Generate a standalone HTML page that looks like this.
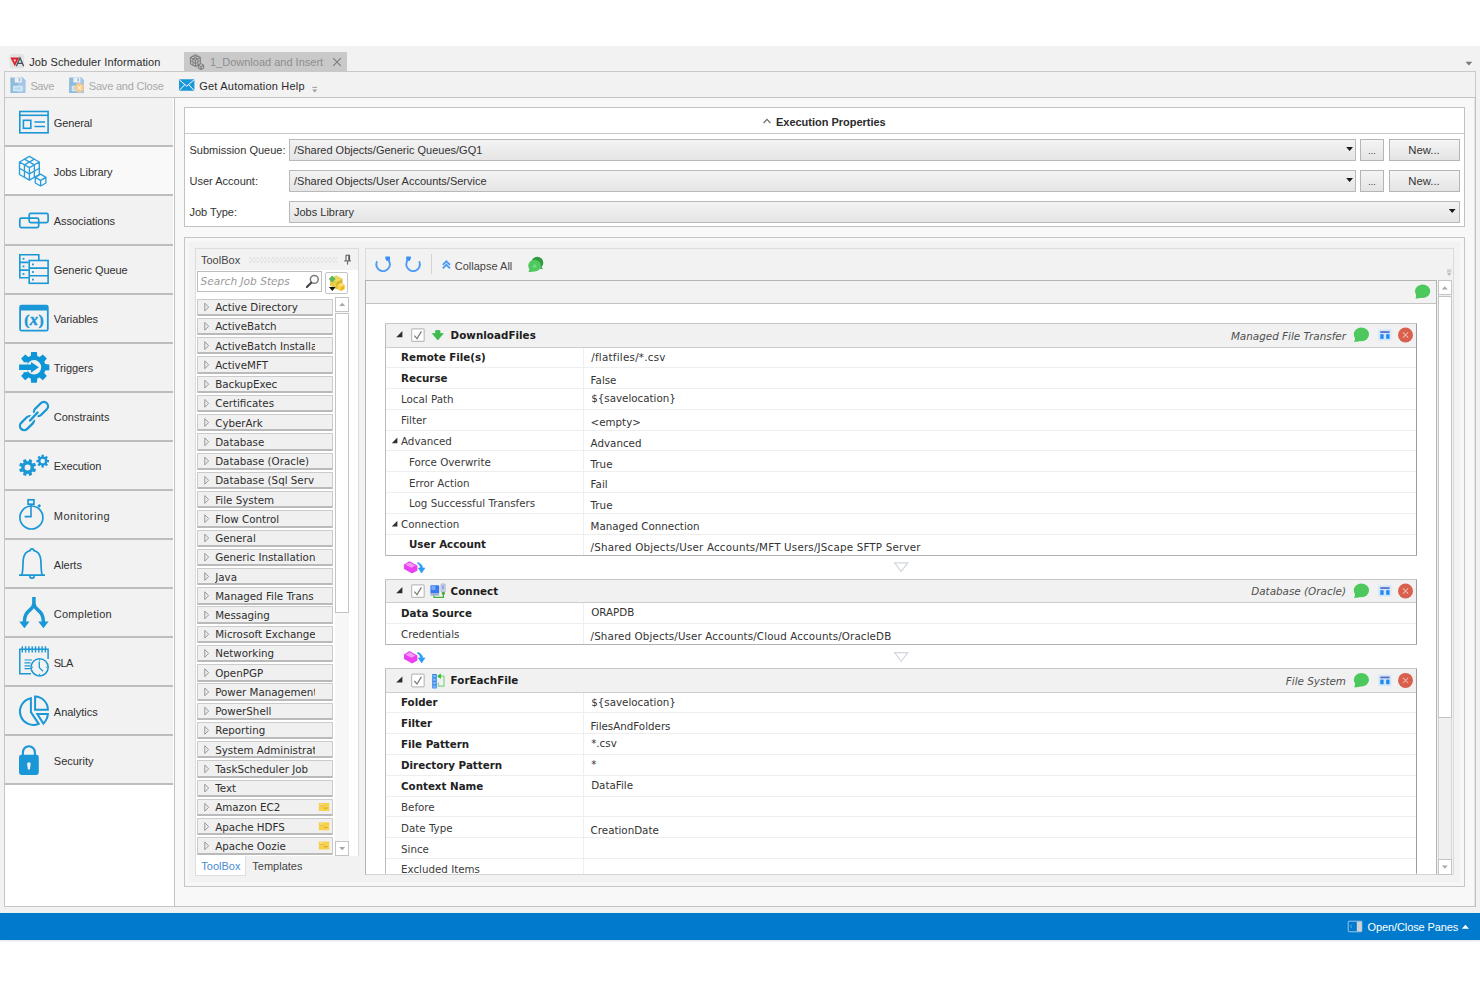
<!DOCTYPE html>
<html lang="en"><head><meta charset="utf-8"><title>Job Scheduler Information</title>
<style>
html,body{margin:0;padding:0;background:#fff;}
body{width:1480px;height:987px;position:relative;overflow:hidden;font-family:"Liberation Sans",sans-serif;font-size:11px;color:#333;}
.a{position:absolute;box-sizing:border-box;}
.t{position:absolute;white-space:nowrap;line-height:14px;}
.v{font-family:"DejaVu Sans","Liberation Sans",sans-serif;font-size:10.3px;}
.b{font-weight:bold;}
.nav{position:absolute;left:5px;width:168px;height:49.08px;box-sizing:border-box;background:#f2f2f2;border-bottom:2px solid #bdbdbd;}
.nav span{position:absolute;left:48.8px;top:17.6px;line-height:14px;white-space:nowrap;color:#303030;}
.combo{position:absolute;box-sizing:border-box;border:1px solid #b9b9b9;background:linear-gradient(#f3f3f3,#e5e5e5);height:22px;}
.btn{position:absolute;box-sizing:border-box;border:1px solid #b5b5b5;background:linear-gradient(#f5f5f5,#e4e4e4);height:22px;text-align:center;line-height:19px;}
.tbi{position:absolute;left:197px;width:136px;height:17.4px;box-sizing:border-box;background:#f0f0f0;border:1px solid #cbcbcb;border-bottom:2px solid #bababa;border-radius:1px;}
.tbi span{position:absolute;left:17.2px;top:0.6px;width:99.6px;overflow:hidden;line-height:14px;white-space:nowrap;color:#2e2e2e;font-family:"DejaVu Sans","Liberation Sans",sans-serif;font-size:10.3px;}
.step{position:absolute;left:385px;width:1032px;box-sizing:border-box;border:1px solid #9c9c9c;border-top-color:#c6c6c6;border-left-color:#bcbcbc;border-bottom-color:#b2b2b2;border-radius:1px;background:#fff;}
.sh{position:absolute;left:0;top:0;right:0;height:23.5px;background:#f1f1f1;border-bottom:1px solid #cdcdcd;box-sizing:border-box;}
.row{position:absolute;left:0;right:0;height:20.8px;box-sizing:border-box;border-bottom:1px solid #eeeeee;}
.row .l{position:absolute;top:2.8px;line-height:14px;white-space:nowrap;color:#3a3a3a;}
.row .r{position:absolute;left:204.5px;line-height:14px;white-space:nowrap;color:#333;}
</style></head>
<body>
<div class="a" style="left:0;top:46px;width:1480px;height:867px;background:#f2f2f2;"></div>
<div class="a" style="left:184px;top:51.5px;width:163px;height:20px;background:#c9c9c9;"></div>
<div class="t" style="left:29.2px;top:55px;color:#2b2b2b;letter-spacing:0.12px;">Job Scheduler Information</div>
<div class="t" style="left:210px;top:55px;color:#8e8e8e;">1_Download and Insert</div>
<div class="a" style="left:4px;top:71px;width:1472px;height:27px;border:1px solid #c9c9c9;border-bottom:none;background:#f2f2f2;"></div>
<div class="t" style="left:30.4px;top:79px;color:#a9a9a9;letter-spacing:-0.4px;">Save</div>
<div class="t" style="left:88.8px;top:79px;color:#a9a9a9;letter-spacing:-0.2px;">Save and Close</div>
<div class="t" style="left:199.2px;top:79px;color:#2b2b2b;letter-spacing:0.22px;">Get Automation Help</div>
<div class="a" style="left:4px;top:97px;width:170px;height:810px;background:#fff;border:1px solid #c6c6c6;border-right:none;"></div>
<div class="nav" style="top:98.3px;"><span style="letter-spacing:-0.14px;">General</span></div>
<div class="nav" style="top:147.38px;background:#f9f9f9;"><span style="letter-spacing:-0.11px;">Jobs Library</span></div>
<div class="nav" style="top:196.46px;"><span style="letter-spacing:-0.05px;">Associations</span></div>
<div class="nav" style="top:245.54px;"><span style="letter-spacing:-0.06px;">Generic Queue</span></div>
<div class="nav" style="top:294.62px;"><span style="letter-spacing:-0.09px;">Variables</span></div>
<div class="nav" style="top:343.7px;"><span style="letter-spacing:-0.08px;">Triggers</span></div>
<div class="nav" style="top:392.78px;"><span style="letter-spacing:0px;">Constraints</span></div>
<div class="nav" style="top:441.86px;"><span style="letter-spacing:-0.1px;">Execution</span></div>
<div class="nav" style="top:490.94px;"><span style="letter-spacing:0.5px;">Monitoring</span></div>
<div class="nav" style="top:540.02px;"><span style="letter-spacing:0px;">Alerts</span></div>
<div class="nav" style="top:589.1px;"><span style="letter-spacing:0.25px;">Completion</span></div>
<div class="nav" style="top:638.18px;"><span style="letter-spacing:-0.6px;">SLA</span></div>
<div class="nav" style="top:687.26px;"><span style="letter-spacing:0px;">Analytics</span></div>
<div class="nav" style="top:736.34px;"><span style="letter-spacing:0px;">Security</span></div>
<div class="a" style="left:173.5px;top:97px;width:1302.4px;height:810px;background:#f8f8f8;border:1px solid #c2c2c2;box-shadow:inset -0.5px 0 0 #cfcfcf;"></div>
<div class="a" style="left:184px;top:107.4px;width:1281px;height:120.1px;background:#fff;border:1px solid #c2c2c2;"></div>
<div class="a" style="left:185px;top:133.2px;width:1279px;height:1px;background:#c9c9c9;"></div>
<div class="t b" style="left:776px;top:114.5px;color:#2b2b2b;letter-spacing:-0.02px;">Execution Properties</div>
<div class="t" style="left:189.5px;top:143px;">Submission Queue:</div>
<div class="combo" style="left:289px;top:139px;width:1067px;"><span class="t" style="left:4px;top:3px;">/Shared Objects/Generic Queues/GQ1</span></div>
<div class="btn" style="left:1360px;top:139px;width:24px;font-size:9px;line-height:22px;">...</div>
<div class="btn" style="left:1388.5px;top:139px;width:71px;font-size:11.3px;line-height:20px;">New...</div>
<div class="t" style="left:189.5px;top:174px;">User Account:</div>
<div class="combo" style="left:289px;top:170px;width:1067px;"><span class="t" style="left:4px;top:3px;">/Shared Objects/User Accounts/Service</span></div>
<div class="btn" style="left:1360px;top:170px;width:24px;font-size:9px;line-height:22px;">...</div>
<div class="btn" style="left:1388.5px;top:170px;width:71px;font-size:11.3px;line-height:20px;">New...</div>
<div class="t" style="left:189.5px;top:205px;">Job Type:</div>
<div class="combo" style="left:289px;top:201px;width:1170.5px;"><span class="t" style="left:4px;top:3px;">Jobs Library</span></div>
<div class="a" style="left:184px;top:237px;width:1281px;height:650px;background:#f2f2f2;border:1px solid #c6c6c6;box-shadow:inset 0 0 0 4px #f7f7f7;"></div>
<div class="a" style="left:195px;top:248.2px;width:164px;height:608.3px;background:#fff;border:1px solid #dcdcdc;border-bottom:none;"></div>
<div class="a" style="left:196px;top:249.2px;width:162px;height:20.6px;background:#f2f2f2;"></div>
<div class="t" style="left:201px;top:253px;color:#444;">ToolBox</div>
<div class="a" style="left:197.3px;top:271px;width:125px;height:20.5px;background:#fff;border:1px solid #bdbdbd;"></div>
<div class="t v" style="left:200.5px;top:274px;color:#9a9a9a;font-style:italic;font-size:10.6px;">Search Job Steps</div>
<div class="a" style="left:325.3px;top:272.2px;width:22.7px;height:22px;background:#fff;border:1px solid #c4c4c4;border-radius:2px;"></div>
<div class="tbi" style="top:298.6px;"><span>Active Directory</span></div>
<div class="tbi" style="top:317.8px;"><span>ActiveBatch</span></div>
<div class="tbi" style="top:337.1px;"><span>ActiveBatch Installa</span></div>
<div class="tbi" style="top:356.3px;"><span>ActiveMFT</span></div>
<div class="tbi" style="top:375.6px;"><span>BackupExec</span></div>
<div class="tbi" style="top:394.8px;"><span>Certificates</span></div>
<div class="tbi" style="top:414.0px;"><span>CyberArk</span></div>
<div class="tbi" style="top:433.3px;"><span>Database</span></div>
<div class="tbi" style="top:452.5px;"><span>Database (Oracle)</span></div>
<div class="tbi" style="top:471.8px;"><span>Database (Sql Serv</span></div>
<div class="tbi" style="top:491.0px;"><span>File System</span></div>
<div class="tbi" style="top:510.2px;"><span>Flow Control</span></div>
<div class="tbi" style="top:529.5px;"><span>General</span></div>
<div class="tbi" style="top:548.7px;"><span>Generic Installation</span></div>
<div class="tbi" style="top:568.0px;"><span>Java</span></div>
<div class="tbi" style="top:587.2px;"><span>Managed File Trans</span></div>
<div class="tbi" style="top:606.4px;"><span>Messaging</span></div>
<div class="tbi" style="top:625.7px;"><span>Microsoft Exchange</span></div>
<div class="tbi" style="top:644.9px;"><span>Networking</span></div>
<div class="tbi" style="top:664.2px;"><span>OpenPGP</span></div>
<div class="tbi" style="top:683.4px;"><span>Power Management</span></div>
<div class="tbi" style="top:702.6px;"><span>PowerShell</span></div>
<div class="tbi" style="top:721.9px;"><span>Reporting</span></div>
<div class="tbi" style="top:741.1px;"><span>System Administrat</span></div>
<div class="tbi" style="top:760.4px;"><span>TaskScheduler Job</span></div>
<div class="tbi" style="top:779.6px;"><span>Text</span></div>
<div class="tbi" style="top:798.8px;"><span>Amazon EC2</span></div>
<div class="tbi" style="top:818.1px;"><span>Apache HDFS</span></div>
<div class="tbi" style="top:837.3px;"><span>Apache Oozie</span></div>
<div class="a" style="left:335.4px;top:297px;width:13.6px;height:559px;background:#f7f7f7;"></div>
<div class="a" style="left:335.4px;top:297px;width:13.6px;height:14.5px;background:#fff;border:1px solid #c4c4c4;"></div>
<div class="a" style="left:335.4px;top:313px;width:13.6px;height:300px;background:#fff;border:1px solid #c4c4c4;"></div>
<div class="a" style="left:335.4px;top:841px;width:13.6px;height:15px;background:#fff;border:1px solid #c4c4c4;"></div>
<div class="a" style="left:195px;top:856px;width:164px;height:19.5px;background:#f2f2f2;"></div>
<div class="a" style="left:195px;top:856px;width:50.5px;height:19.5px;background:#fff;border:1px solid #dedede;border-top:none;"></div>
<div class="t" style="left:201.3px;top:859px;color:#4a8bd0;">ToolBox</div>
<div class="t" style="left:252.3px;top:859px;color:#444;">Templates</div>
<div class="a" style="left:364.5px;top:248.2px;width:1089px;height:627.3px;background:#f2f2f2;border:1px solid #dcdcdc;"></div>
<div class="t" style="left:454.8px;top:258.6px;color:#444;">Collapse All</div>
<div class="a" style="left:431px;top:254px;width:1px;height:20px;background:#d4d4d4;"></div>
<div class="a" style="left:365px;top:279.5px;width:1072px;height:595.6px;background:#fff;border:1px solid #b4b4b4;border-bottom:1px solid #d4d4d4;"></div>
<div class="a" style="left:366px;top:280.5px;width:1070px;height:23px;background:#f2f2f2;border-bottom:1px solid #c4c4c4;"></div>
<div class="a" style="left:1438px;top:280px;width:13.5px;height:595px;background:#f0f0f0;border:1px solid #d6d6d6;"></div>
<div class="a" style="left:1438px;top:280px;width:13.5px;height:15px;background:#fff;border:1px solid #c4c4c4;"></div>
<div class="a" style="left:1438px;top:296px;width:13.5px;height:422px;background:#fff;border:1px solid #c4c4c4;"></div>
<div class="a" style="left:1438px;top:859px;width:13.5px;height:15.6px;background:#fff;border:1px solid #c4c4c4;"></div>
<div class="step" style="top:323px;height:232.5px;">
<div class="sh"><span class="t v b" style="left:64.6px;top:4.4px;color:#1c1c1c;letter-spacing:0.05px;">DownloadFiles</span><span class="t v" style="right:70px;top:4.6px;color:#505050;font-style:italic;font-size:10.4px;">Managed File Transfer</span></div>
<div class="row" style="top:23.5px;"><span class="l v b" style="left:15px;color:#222;">Remote File(s)</span><span class="r v" style="top:2.2px;left:205.2px;"><span style="letter-spacing:0.26px">/flatfiles/*.csv</span></span></div>
<div class="row" style="top:44.3px;"><span class="l v b" style="left:15px;color:#222;">Recurse</span><span class="r v" style="top:5.2px;left:204.6px;">False</span></div>
<div class="row" style="top:65.1px;"><span class="l v" style="left:15px;top:3.4px;">Local Path</span><span class="r v" style="top:2.2px;left:205.2px;">${savelocation}</span></div>
<div class="row" style="top:85.9px;"><span class="l v" style="left:15px;top:3.4px;">Filter</span><span class="r v" style="top:5.2px;left:204.6px;">&lt;empty&gt;</span></div>
<div class="row" style="top:106.7px;"><span class="l v" style="left:15px;top:3.4px;">Advanced</span><span class="r v" style="top:5.2px;left:204.6px;">Advanced</span></div>
<div class="row" style="top:127.5px;"><span class="l v" style="left:23px;top:3.4px;">Force Overwrite</span><span class="r v" style="top:5.2px;left:204.6px;">True</span></div>
<div class="row" style="top:148.3px;"><span class="l v" style="left:23px;top:3.4px;">Error Action</span><span class="r v" style="top:5.2px;left:204.6px;">Fail</span></div>
<div class="row" style="top:169.1px;"><span class="l v" style="left:23px;top:3.4px;">Log Successful Transfers</span><span class="r v" style="top:5.2px;left:204.6px;">True</span></div>
<div class="row" style="top:189.9px;"><span class="l v" style="left:15px;top:3.4px;">Connection</span><span class="r v" style="top:5.2px;left:204.6px;">Managed Connection</span></div>
<div class="row" style="top:210.7px;border-bottom:none;"><span class="l v b" style="left:23px;color:#222;">User Account</span><span class="r v" style="top:5.2px;left:204.6px;"><span style="letter-spacing:0.2px">/Shared Objects/User Accounts/MFT Users/JScape SFTP Server</span></span></div>
<div class="a" style="left:197px;top:23.5px;width:1px;bottom:0;background:#efefef;"></div>
</div>
<div class="step" style="top:578.7px;height:66.1px;">
<div class="sh"><span class="t v b" style="left:64.6px;top:4.4px;color:#1c1c1c;letter-spacing:0.05px;">Connect</span><span class="t v" style="right:70px;top:4.6px;color:#505050;font-style:italic;font-size:10.4px;">Database (Oracle)</span></div>
<div class="row" style="top:23.5px;"><span class="l v b" style="left:15px;color:#222;">Data Source</span><span class="r v" style="top:2.2px;left:205.2px;">ORAPDB</span></div>
<div class="row" style="top:44.3px;border-bottom:none;"><span class="l v" style="left:15px;top:3.4px;">Credentials</span><span class="r v" style="top:5.2px;left:204.6px;"><span style="letter-spacing:0.125px">/Shared Objects/User Accounts/Cloud Accounts/OracleDB</span></span></div>
<div class="a" style="left:197px;top:23.5px;width:1px;bottom:0;background:#efefef;"></div>
</div>
<div class="step" style="top:668.1px;height:206.4px;border-bottom:none;overflow:hidden;">
<div class="sh"><span class="t v b" style="left:64.6px;top:4.4px;color:#1c1c1c;letter-spacing:0.05px;">ForEachFile</span><span class="t v" style="right:70px;top:4.6px;color:#505050;font-style:italic;font-size:10.4px;">File System</span></div>
<div class="row" style="top:23.5px;"><span class="l v b" style="left:15px;color:#222;">Folder</span><span class="r v" style="top:2.2px;left:205.2px;">${savelocation}</span></div>
<div class="row" style="top:44.3px;"><span class="l v b" style="left:15px;color:#222;">Filter</span><span class="r v" style="top:5.2px;left:204.6px;">FilesAndFolders</span></div>
<div class="row" style="top:65.1px;"><span class="l v b" style="left:15px;color:#222;">File Pattern</span><span class="r v" style="top:2.2px;left:205.2px;">*.csv</span></div>
<div class="row" style="top:85.9px;"><span class="l v b" style="left:15px;color:#222;">Directory Pattern</span><span class="r v" style="top:2.2px;left:205.2px;">*</span></div>
<div class="row" style="top:106.7px;"><span class="l v b" style="left:15px;color:#222;">Context Name</span><span class="r v" style="top:2.2px;left:205.2px;">DataFile</span></div>
<div class="row" style="top:127.5px;"><span class="l v" style="left:15px;top:3.4px;">Before</span><span class="r v" style="top:5.2px;left:204.6px;"></span></div>
<div class="row" style="top:148.3px;"><span class="l v" style="left:15px;top:3.4px;">Date Type</span><span class="r v" style="top:5.2px;left:204.6px;">CreationDate</span></div>
<div class="row" style="top:169.1px;"><span class="l v" style="left:15px;top:3.4px;">Since</span><span class="r v" style="top:5.2px;left:204.6px;"></span></div>
<div class="row" style="top:189.9px;"><span class="l v" style="left:15px;top:3.4px;">Excluded Items</span><span class="r v" style="top:5.2px;left:204.6px;"></span></div>
<div class="a" style="left:197px;top:23.5px;width:1px;bottom:0;background:#efefef;"></div>
</div>
<div class="a" style="left:0;top:913.4px;width:1480px;height:26.4px;background:#007acc;box-shadow:0 1px 2px rgba(0,0,0,0.12);"></div>
<div class="t" style="left:1367.5px;top:920px;color:#fff;letter-spacing:-0.1px;">Open/Close Panes</div>
<svg class="a" style="left:0;top:0;" width="176" height="800" viewBox="0 0 176 800" fill="none" stroke="none">
<g stroke="#1a97d6" stroke-width="1.6" fill="none"><rect x="19.8" y="111.5" width="28.3" height="21.3"/><path d="M19.8,115.3H48.1"/><rect x="23.4" y="120.3" width="7.4" height="8"/><path d="M34.4,122H45M34.4,126.6H45" stroke-width="1.5"/></g>
<g transform="translate(19,155.8) scale(1) translate(-19,-155.8)" stroke="#2c9ddb" stroke-width="1.35" fill="none" stroke-linejoin="round"><path d="M29.40,156.30L39.30,162.00L39.30,174.50L29.40,180.20L19.50,174.50L19.50,162.00Z M19.50,162.00L29.40,167.70L39.30,162.00 M29.40,167.70L29.40,180.20"/><path d="M24.45,159.15L34.35,164.85M34.35,159.15L24.45,164.85M19.50,168.25L29.40,173.95M24.45,164.85L24.45,177.35M39.30,168.25L29.40,173.95M34.35,164.85L34.35,177.35"/><path d="M40.60,174.20L45.90,177.30L45.90,183.00L40.60,186.00L35.30,183.00L35.30,177.30Z M35.30,177.30L40.60,180.30L45.90,177.30 M40.60,180.30L40.60,186.00" fill="#f9f9f9"/></g>
<g stroke="#1a97d6" stroke-width="1.7" fill="none"><rect x="29.2" y="213.3" width="18.9" height="9.4" rx="1.6"/><rect x="19.8" y="218.1" width="18.9" height="9.5" rx="1.6"/></g>
<g stroke="#1a97d6" stroke-width="1.6" fill="none"><path d="M28.6,254.8H19.8V277.8H28.6M19.8,262.4H28.6M19.8,270.1H28.6M28.6,254.8H38.8V260"/><rect x="29.2" y="260.5" width="18.9" height="22.8" fill="#f2f2f2"/><path d="M29.2,268.1H48.1M29.2,275.7H48.1"/></g>
<g fill="#1a97d6"><rect x="22.6" y="257.9" width="1.8" height="1.8"/><rect x="22.6" y="265.5" width="1.8" height="1.8"/><rect x="22.6" y="273.1" width="1.8" height="1.8"/><rect x="32" y="263.5" width="1.8" height="1.8"/><rect x="32" y="271.1" width="1.8" height="1.8"/><rect x="32" y="278.7" width="1.8" height="1.8"/></g>
<path d="M21.6,304.8H46.3a2.4,2.4 0 0 1 2.4,2.4V329.2a2.4,2.4 0 0 1 -2.4,2.4H21.6a2.4,2.4 0 0 1 -2.4,-2.4V307.2a2.4,2.4 0 0 1 2.4,-2.4Z M21,310.6V329.8H46.9V310.6Z" fill="#1a97d6" fill-rule="evenodd"/>
<text x="34" y="325.4" text-anchor="middle" font-family="'Liberation Serif',serif" font-weight="bold" font-size="15.5" fill="#1a97d6" stroke="#1a97d6" stroke-width="0.45">(<tspan font-style="italic" font-size="16.5" dx="0.3">x</tspan><tspan dx="0.6">)</tspan></text>
<path d="M45.24,364.04 L49.33,364.43 L49.33,370.17 L45.24,370.56 L44.25,372.94 L46.87,376.11 L42.81,380.17 L39.64,377.55 L37.26,378.54 L36.87,382.63 L31.13,382.63 L30.74,378.54 L28.36,377.55 L25.19,380.17 L21.13,376.11 L23.75,372.94 L22.76,370.56 L18.67,370.17 L18.67,364.43 L22.76,364.04 L23.75,361.66 L21.13,358.49 L25.19,354.43 L28.36,357.05 L30.74,356.06 L31.13,351.97 L36.87,351.97 L37.26,356.06 L39.64,357.05 L42.81,354.43 L46.87,358.49 L44.25,361.66Z M26.80,367.30 a7.2,7.2 0 1,0 14.4,0 a7.2,7.2 0 1,0 -14.4,0Z" fill="#0c96d8" fill-rule="evenodd"/>
<rect x="17" y="362.3" width="10.6" height="9.9" fill="#f2f2f2"/>
<path d="M19.1,364.6H31V361.9L38.9,367.3L31,372.7V370H19.1Z" fill="#0c96d8"/>
<g stroke="#1a97d6" stroke-width="2.3" fill="none" stroke-linecap="round"><rect x="-8.2" y="-4.25" width="16.4" height="8.5" rx="4.25" transform="translate(41,409) rotate(-45)"/><rect x="-8.2" y="-4.25" width="16.4" height="8.5" rx="4.25" transform="translate(27,423.1) rotate(-45)"/><path d="M31.6,418.9L36.2,414" stroke="#f2f2f2" stroke-width="5.4" stroke-linecap="butt"/><path d="M30.1,420.5L37.6,412.5" stroke-width="2.4"/></g>
<path d="M33.86,468.25 L36.10,469.34 L34.92,472.21 L32.55,471.39 L31.49,472.45 L32.31,474.82 L29.44,476.00 L28.35,473.76 L26.85,473.76 L25.76,476.00 L22.89,474.82 L23.71,472.45 L22.65,471.39 L20.28,472.21 L19.10,469.34 L21.34,468.25 L21.34,466.75 L19.10,465.66 L20.28,462.79 L22.65,463.61 L23.71,462.55 L22.89,460.18 L25.76,459.00 L26.85,461.24 L28.35,461.24 L29.44,459.00 L32.31,460.18 L31.49,462.55 L32.55,463.61 L34.92,462.79 L36.10,465.66 L33.86,466.75Z M24.60,467.50 a3.0,3.0 0 1,0 6.0,0 a3.0,3.0 0 1,0 -6.0,0Z M47.13,459.86 L49.00,459.96 L49.00,462.24 L47.13,462.34 L46.71,463.35 L47.96,464.75 L46.35,466.36 L44.95,465.11 L43.94,465.53 L43.84,467.40 L41.56,467.40 L41.46,465.53 L40.45,465.11 L39.05,466.36 L37.44,464.75 L38.69,463.35 L38.27,462.34 L36.40,462.24 L36.40,459.96 L38.27,459.86 L38.69,458.85 L37.44,457.45 L39.05,455.84 L40.45,457.09 L41.46,456.67 L41.56,454.80 L43.84,454.80 L43.94,456.67 L44.95,457.09 L46.35,455.84 L47.96,457.45 L46.71,458.85Z M40.40,461.10 a2.3,2.3 0 1,0 4.6,0 a2.3,2.3 0 1,0 -4.6,0Z" fill="#1a97d6" fill-rule="evenodd"/>
<g stroke="#1a97d6" stroke-width="1.7" fill="none"><circle cx="31.4" cy="517.5" r="11.5"/><rect x="28.1" y="499.8" width="5.8" height="4.4"/><path d="M31,505V516.6H24.6" stroke-width="1.6"/><path d="M38.2,506.8L40.2,504.8" stroke-width="2.6"/></g>
<g stroke="#1a97d6" stroke-width="1.7" fill="none" stroke-linejoin="round"><path d="M19,575.2H45M21.8,575.2C23.4,570 22.6,563 23.4,558.5C24.3,553.6 27,551.2 30.2,550.6C30.2,548.3 33.8,548.3 33.8,550.6C37,551.2 39.7,553.6 40.6,558.5C41.4,563 40.6,570 42.2,575.2"/><path d="M29.6,576C30.2,579 33.8,579 34.4,576" stroke-width="1.6"/></g>
<g stroke="#1a97d6" stroke-width="3.5" fill="none"><path d="M33.9,597V603.5C33.9,610.5 24.3,609 24.3,622.5"/><path d="M33.9,603.5C33.9,610.5 43.5,609 43.5,622.5"/></g>
<path d="M19.2,621.6H29.6L24.4,628.3Z M38.2,621.6H48.6L43.4,628.3Z" fill="#1a97d6"/>
<g stroke="#1a97d6" stroke-width="1.5" fill="none"><path d="M31,673.8H19.8V649.3H48.1V659"/><path d="M22.3,646.2V652.6M25.6,646.2V652.6M28.9,646.2V652.6M32.2,646.2V652.6M35.5,646.2V652.6M38.8,646.2V652.6M42.1,646.2V652.6M45.4,646.2V652.6" stroke-width="1.4"/><path d="M24.5,660H32M24.5,662.9H30.5M24.5,665.8H30M24.5,668.7H30.5" stroke-width="1.2"/><circle cx="39.6" cy="667.3" r="8.6" fill="#f2f2f2"/><path d="M39.3,661.5V667.6L43,671.2" stroke-width="1.3"/><path d="M39.6,659.6V660.8M39.6,673.8V675M31.9,667.3H33.1M46.1,667.3H47.3" stroke-width="1"/></g>
<g stroke="#1a97d6" stroke-width="2" fill="none" stroke-linejoin="miter"><path d="M30.9,698.2A13.5,13.5 0 1 0 38.7,723.9L30.9,712.1Z"/><path d="M35.1,696.6A13.1,13.1 0 0 1 47.9,709.8H35.1Z"/><path d="M37.3,714H47.9C47.6,718 45.6,721.4 43.4,723.6Z"/></g>
<path d="M22.9,756V752.5A6,6.3 0 0 1 34.9,752.5V756" stroke="#1a97d6" stroke-width="2.1" fill="none"/>
<path d="M21.4,754.8H36.4A2.4,2.4 0 0 1 38.8,757.2V772.6A2.4,2.4 0 0 1 36.4,775H21.4A2.4,2.4 0 0 1 19,772.6V757.2A2.4,2.4 0 0 1 21.4,754.8Z M27.2,764.6A1.8,1.8 0 1 1 30.6,764.6L29.9,769.6H27.9Z" fill="#1a97d6" fill-rule="evenodd"/>
</svg>
<svg class="a" style="left:0;top:0;" width="1480" height="300" viewBox="0 0 1480 300" fill="none">
<rect x="9.5" y="54" width="14.6" height="14.4" rx="2.6" fill="#e3e3e3"/>
<path d="M10.4,57.6H19.3L14.8,66.2Z" fill="#d9232b"/><path d="M13.4,59.6H16.2L14.8,62.2Z" fill="#f3d0d0"/>
<path d="M16.3,66.2L20,57.9L23.7,66.2M17.8,63.4H22.3" stroke="#445260" stroke-width="1.3" stroke-linejoin="miter"/>
<g transform="translate(190.2,54.4) scale(0.5) translate(-19,-155.8)" stroke="#808080" stroke-width="2.2" fill="none" stroke-linejoin="round"><path d="M29.40,156.30L39.30,162.00L39.30,174.50L29.40,180.20L19.50,174.50L19.50,162.00Z M19.50,162.00L29.40,167.70L39.30,162.00 M29.40,167.70L29.40,180.20"/><path d="M24.45,159.15L34.35,164.85M34.35,159.15L24.45,164.85M19.50,168.25L29.40,173.95M24.45,164.85L24.45,177.35M39.30,168.25L29.40,173.95M34.35,164.85L34.35,177.35"/><path d="M40.60,174.20L45.90,177.30L45.90,183.00L40.60,186.00L35.30,183.00L35.30,177.30Z M35.30,177.30L40.60,180.30L45.90,177.30 M40.60,180.30L40.60,186.00" fill="#c9c9c9"/></g>
<path d="M333.2,58.2L340.8,65.8M340.8,58.2L333.2,65.8" stroke="#7a7a7a" stroke-width="1.1"/>
<path d="M1465.5,61.8H1472.3L1468.9,65.6Z" fill="#7a7a7a"/>
<path d="M10.4,77.5H22.6L25.3,80.2V93.0H10.4Z" fill="#8fbcdb"/><path d="M18.0,77.5H22.6L25.3,80.2V93.0H18.0Z" fill="#a6c6e6"/><rect x="14.7" y="77.5" width="7" height="5" fill="#eef2f7"/><rect x="18.700000000000003" y="78.3" width="1.5" height="3" fill="#8fb4e0"/><rect x="13.0" y="85.7" width="9.8" height="5.6" rx="0.8" fill="#d4e9f6"/><rect x="14.600000000000001" y="87.3" width="6.6" height="2.4" rx="0.8" fill="#b4d8f2"/>
<path d="M69.1,77.5H81.3L84.0,80.2V93.0H69.1Z" fill="#8fbcdb"/><path d="M76.69999999999999,77.5H81.3L84.0,80.2V93.0H76.69999999999999Z" fill="#a6c6e6"/><rect x="73.39999999999999" y="77.5" width="7" height="5" fill="#eef2f7"/><rect x="77.39999999999999" y="78.3" width="1.5" height="3" fill="#8fb4e0"/><rect x="71.69999999999999" y="85.7" width="9.8" height="5.6" rx="0.8" fill="#d4e9f6"/><rect x="73.3" y="87.3" width="6.6" height="2.4" rx="0.8" fill="#b4d8f2"/>
<circle cx="79.4" cy="87.8" r="4.6" fill="#f6c98c"/><path d="M77.6,85.8L81.2,89.8M81.2,85.8L77.6,89.8" stroke="#fdf0dc" stroke-width="1.1"/>
<rect x="179" y="79.3" width="15.4" height="11.5" rx="0.8" fill="#1a97d6"/><path d="M179.4,79.9L186.7,86.2L194,79.9M179.4,90.4L184.6,84.8M194,90.4L188.8,84.8" stroke="#fff" stroke-width="1"/>
<path d="M312.4,87.4H317" stroke="#9a9a9a" stroke-width="1"/><path d="M312.3,89.4H317.1L314.7,92.6Z" fill="#9a9a9a"/>
<path d="M763.6,123L767,119.4L770.4,123" stroke="#6a6a6a" stroke-width="1.2"/>
<path d="M1346.1999999999998,147H1353.0L1349.6,151Z" fill="#1a1a1a"/>
<path d="M1346.1999999999998,178H1353.0L1349.6,182Z" fill="#1a1a1a"/>
<path d="M1448.8,209H1455.6000000000001L1452.2,213Z" fill="#1a1a1a"/>
<defs><pattern id="grip" x="249" y="257" width="3.8" height="4.2" patternUnits="userSpaceOnUse"><rect x="0.3" y="0.2" width="1.5" height="1.3" fill="#d6d6d6"/><rect x="2.2" y="2.3" width="1.5" height="1.3" fill="#d6d6d6"/></pattern></defs>
<rect x="249" y="257" width="88.3" height="6" fill="url(#grip)"/>
<path d="M346,255.2H349.6V260.5" stroke="#555" stroke-width="1"/><path d="M346,255.2V260.5" stroke="#555" stroke-width="1"/><path d="M349.1,255.2V260.5" stroke="#555" stroke-width="1.6"/><path d="M344.3,260.9H350.8" stroke="#555" stroke-width="1.1"/><path d="M347.6,261.4V264.6" stroke="#555" stroke-width="1"/>
<circle cx="314.3" cy="279.4" r="3.9" stroke="#7c7c7c" stroke-width="1.5" fill="#fff"/><path d="M311.2,282.7L306.9,286.9" stroke="#444" stroke-width="2.1" stroke-linecap="round"/>
<path d="M330.2,279L336.3,275.4L342.5,279V285.6L336.3,289.2L330.2,285.6Z" fill="#d9b728"/><path d="M330.2,279L336.3,282.4V289.2L330.2,285.6Z" fill="#e6cd4a"/><path d="M336.3,275.4L342.5,279L336.3,282.4L330.2,279Z" fill="#ecd85e"/>
<path d="M332.2,275.4L335.6,278.9L332.2,282.4L328.8,278.9Z" fill="#5cb860"/>
<path d="M337.4,285L341,283L344.6,285V289L341,291L337.4,289Z" fill="#f2b60c"/><path d="M337.4,285L341,287V291L337.4,289Z" fill="#f7d24c"/><path d="M341,283L344.6,285L341,287L337.4,285Z" fill="#f9e07a"/>
<path d="M329,287H335.6L332.3,290.9Z" fill="#111"/>
<path d="M376.71,261.97A6.8,6.8 0 1 0 386.29,258.30" stroke="#4f9cf9" stroke-width="1.9" stroke-linecap="round"/>
<path d="M385.2,256.6H390V261.2L388.3,259.3L386.4,261.2Z" fill="#3b8ff8"/>
<path d="M419.49,261.97A6.8,6.8 0 1 1 409.91,258.30" stroke="#4f9cf9" stroke-width="1.9" stroke-linecap="round"/>
<path d="M411,256.6H406.2V261.2L407.9,259.3L409.8,261.2Z" fill="#3b8ff8"/>
<path d="M442.8,264.9L446.4,261.3L450,264.9M442.8,268.4L446.4,264.8L450,268.4" stroke="#4a98f8" stroke-width="1.7"/>
<circle cx="537.3" cy="262.7" r="6" fill="#2f9a3f"/><path d="M541,266.5L543.2,269.3L539,268.2Z" fill="#2f9a3f"/>
<ellipse cx="534.6" cy="265.6" rx="6.4" ry="5.9" fill="#4fc85e"/><path d="M529.10,267.67C529.48,270.32 528.84,271.50 528.39,272.09C531.40,272.09 533.32,271.38 534.60,270.91Z" fill="#4fc85e"/>
<path d="M532.2,267.6L534.6,263.4L537,267.6Z" fill="#7ad987"/>
<path d="M1447,270H1451.4M1447,271.8H1451.4" stroke="#b4b4b4" stroke-width="0.9"/><path d="M1447,273.2H1451.4L1449.2,275.8Z" fill="#b4b4b4"/>
<ellipse cx="1422.6" cy="291.2" rx="7.6" ry="6.7" fill="#4cc85c"/><path d="M1416.06,293.55C1416.52,296.56 1415.76,297.90 1415.23,298.57C1418.80,298.57 1421.08,297.77 1422.60,297.23Z" fill="#4cc85c"/>
</svg>
<svg class="a" style="left:0;top:0;" width="1480" height="987" viewBox="0 0 1480 987" fill="none">
<path d="M402.4,331V337.2H396.2Z" fill="#2e2e2e"/><rect x="411.6" y="328.8" width="12.6" height="12.6" rx="1" fill="#fff" stroke="#bdbdbd" stroke-width="1.2"/><path d="M414.3,335.6L417,338.6L421.4,331.4" stroke="#808080" stroke-width="1.3" fill="none"/><path d="M435.6,330.6H440V333.6H443.2L437.8,340L432.4,333.6H435.6Z" fill="#3dbb4b" stroke="#3dbb4b" stroke-width="0.8" stroke-linejoin="round"/><ellipse cx="1361.4" cy="334.4" rx="7.6" ry="6.8" fill="#4cc85c"/><path d="M1354.86,336.78C1355.32,339.84 1354.56,341.20 1354.03,341.88C1357.60,341.88 1359.88,341.06 1361.40,340.52Z" fill="#4cc85c"/><rect x="1378.4" y="329.4" width="12.8" height="11" fill="#cfe6fb"/><rect x="1380.3" y="331.2" width="9.2" height="1.7" fill="#5668c2"/><rect x="1380.3" y="334.2" width="3.3" height="4.6" fill="#1d8af0"/><rect x="1386.2" y="334.2" width="3.3" height="4.6" fill="#1d8af0"/><circle cx="1405.5" cy="335" r="7.5" fill="#d9604c"/><path d="M1402.9,332.4L1408.1,337.6M1408.1,332.4L1402.9,337.6" stroke="#efb8ad" stroke-width="1.05"/>
<path d="M404,564.6L409.4,561.2L417.4,565.6V570.6L412.2,573.6L404,569Z" fill="#e840f0"/><path d="M405.4,564.8L409.5,562.4L415.4,565.6L411.6,567.8Z" fill="#f29af6"/><path d="M417.6,562.4C421,563.4 422.6,565.6 422.6,568H425L421.6,573L418.2,568H420.4C420.2,566 419.4,564.4 417.6,563.6Z" fill="#2a9df4" stroke="#2a9df4" stroke-width="0.6" stroke-linejoin="round"/><path d="M894.6,562.8H907.8L901.2,571.4Z" stroke="#d3d7e1" stroke-width="1.2" fill="none"/>
<path d="M402.4,587V593.2H396.2Z" fill="#2e2e2e"/><rect x="411.6" y="584.8" width="12.6" height="12.6" rx="1" fill="#fff" stroke="#bdbdbd" stroke-width="1.2"/><path d="M414.3,591.6L417,594.6L421.4,587.4" stroke="#808080" stroke-width="1.3" fill="none"/><rect x="430.4" y="585.2" width="8.8" height="8.4" rx="0.8" fill="#3a78f0"/><rect x="431.4" y="586" width="4" height="4" fill="#78a8fa"/><path d="M430.4,593.4H439.2V595.6H430.4Z" fill="#9ab0d0"/><rect x="441" y="584" width="4.2" height="8" rx="0.6" fill="#d6dcea" stroke="#98a6c4" stroke-width="0.7"/><rect x="442.4" y="585.2" width="1.2" height="4.4" fill="#6a86d8"/><path d="M434,595.4V597.4H443.4V593.6" stroke="#4aae3a" stroke-width="1.3" fill="none"/><circle cx="443.4" cy="593.2" r="1.5" fill="#3aa82a"/><ellipse cx="1361.4" cy="590.4" rx="7.6" ry="6.8" fill="#4cc85c"/><path d="M1354.86,592.78C1355.32,595.84 1354.56,597.20 1354.03,597.88C1357.60,597.88 1359.88,597.06 1361.40,596.52Z" fill="#4cc85c"/><rect x="1378.4" y="585.4" width="12.8" height="11" fill="#cfe6fb"/><rect x="1380.3" y="587.2" width="9.2" height="1.7" fill="#5668c2"/><rect x="1380.3" y="590.2" width="3.3" height="4.6" fill="#1d8af0"/><rect x="1386.2" y="590.2" width="3.3" height="4.6" fill="#1d8af0"/><circle cx="1405.5" cy="591" r="7.5" fill="#d9604c"/><path d="M1402.9,588.4L1408.1,593.6M1408.1,588.4L1402.9,593.6" stroke="#efb8ad" stroke-width="1.05"/>
<path d="M404,654.5L409.4,651.1L417.4,655.5V660.5L412.2,663.5L404,658.9Z" fill="#e840f0"/><path d="M405.4,654.6999999999999L409.5,652.3L415.4,655.5L411.6,657.6999999999999Z" fill="#f29af6"/><path d="M417.6,652.3C421,653.3 422.6,655.5 422.6,657.9H425L421.6,662.9L418.2,657.9H420.4C420.2,655.9 419.4,654.3 417.6,653.5Z" fill="#2a9df4" stroke="#2a9df4" stroke-width="0.6" stroke-linejoin="round"/><path d="M894.6,652.6999999999999H907.8L901.2,661.3Z" stroke="#d3d7e1" stroke-width="1.2" fill="none"/>
<path d="M402.4,676.4V682.5999999999999H396.2Z" fill="#2e2e2e"/><rect x="411.6" y="674.2" width="12.6" height="12.6" rx="1" fill="#fff" stroke="#bdbdbd" stroke-width="1.2"/><path d="M414.3,681.0L417,684.0L421.4,676.8" stroke="#808080" stroke-width="1.3" fill="none"/><rect x="432.2" y="674.0" width="4.6" height="14.4" fill="#3a86ea"/><rect x="433.2" y="675.0" width="2.6" height="2.2" rx="0.5" fill="#7cc0fa"/><rect x="433.2" y="678.5" width="2.6" height="2.2" rx="0.5" fill="#7cc0fa"/><rect x="433.2" y="682.0" width="2.6" height="2.2" rx="0.5" fill="#7cc0fa"/><rect x="433.2" y="685.5" width="2.6" height="2.2" rx="0.5" fill="#7cc0fa"/><path d="M440.6,676.1999999999999H444V686.1999999999999H438.4V682.4" stroke="#86d486" stroke-width="1.2" fill="none"/><path d="M437.6,676.1999999999999L440.6,674.0V678.4Z" fill="#1fbf1f" stroke="#1fbf1f" stroke-width="0.6"/><ellipse cx="1361.4" cy="679.8" rx="7.6" ry="6.8" fill="#4cc85c"/><path d="M1354.86,682.18C1355.32,685.24 1354.56,686.60 1354.03,687.28C1357.60,687.28 1359.88,686.46 1361.40,685.92Z" fill="#4cc85c"/><rect x="1378.4" y="674.8" width="12.8" height="11" fill="#cfe6fb"/><rect x="1380.3" y="676.5999999999999" width="9.2" height="1.7" fill="#5668c2"/><rect x="1380.3" y="679.5999999999999" width="3.3" height="4.6" fill="#1d8af0"/><rect x="1386.2" y="679.5999999999999" width="3.3" height="4.6" fill="#1d8af0"/><circle cx="1405.5" cy="680.4" r="7.5" fill="#d9604c"/><path d="M1402.9,677.8L1408.1,683.0M1408.1,677.8L1402.9,683.0" stroke="#efb8ad" stroke-width="1.05"/>
<path d="M397.4,437.6V443.20000000000005H391.8Z" fill="#2e2e2e"/>
<path d="M397.4,520.8V526.4H391.8Z" fill="#2e2e2e"/>
<path d="M1441.8,289.4H1447.8L1444.8,286.2Z" fill="#a8a8a8"/><path d="M1441.8,865.6H1447.8L1444.8,868.8Z" fill="#a8a8a8"/>
<path d="M339.2,306H345.2L342.2,302.8Z" fill="#a8a8a8"/><path d="M339.2,847H345.2L342.2,850.2Z" fill="#a8a8a8"/>
<rect x="1348.2" y="921.2" width="13.6" height="10.6" rx="0.8" stroke="#a9cdee" stroke-width="0.9"/><rect x="1356.8" y="921.6" width="5" height="9.8" fill="#d0d2d4"/><path d="M1351.8,924.6L1350.4,926.2L1351.8,927.8" stroke="#8cc0ec" stroke-width="0.8"/>
<path d="M1461.8,928.7H1469L1465.4,924.7Z" fill="#fff"/>
</svg>
<svg class="a" style="left:0;top:0;" width="400" height="987" viewBox="0 0 400 987" fill="none">
<path d="M204.8,303.2V311.0L208.6,307.1ZM204.8,322.4V330.2L208.6,326.3ZM204.8,341.7V349.5L208.6,345.6ZM204.8,360.9V368.7L208.6,364.8ZM204.8,380.2V388.0L208.6,384.1ZM204.8,399.4V407.2L208.6,403.3ZM204.8,418.6V426.4L208.6,422.5ZM204.8,437.9V445.7L208.6,441.8ZM204.8,457.1V464.9L208.6,461.0ZM204.8,476.4V484.2L208.6,480.3ZM204.8,495.6V503.4L208.6,499.5ZM204.8,514.8V522.6L208.6,518.7ZM204.8,534.1V541.9L208.6,538.0ZM204.8,553.3V561.1L208.6,557.2ZM204.8,572.6V580.4L208.6,576.5ZM204.8,591.8V599.6L208.6,595.7ZM204.8,611.0V618.8L208.6,614.9ZM204.8,630.3V638.1L208.6,634.2ZM204.8,649.5V657.3L208.6,653.4ZM204.8,668.8V676.6L208.6,672.7ZM204.8,688.0V695.8L208.6,691.9ZM204.8,707.2V715.0L208.6,711.1ZM204.8,726.5V734.3L208.6,730.4ZM204.8,745.7V753.5L208.6,749.6ZM204.8,765.0V772.8L208.6,768.9ZM204.8,784.2V792.0L208.6,788.1ZM204.8,803.4V811.2L208.6,807.3ZM204.8,822.7V830.5L208.6,826.6ZM204.8,841.9V849.7L208.6,845.8Z" stroke="#8c8c8c" stroke-width="0.9" fill="none" stroke-linejoin="round"/>
<rect x="318.8" y="803.0" width="10.4" height="8" fill="#f4d24e"/><path d="M320.2,805.6H323.4M323.8,808.2H327.6" stroke="#e0a820" stroke-width="1.2"/><rect x="320.4" y="804.0" width="2.4" height="1.6" fill="#f9e89a"/>
<rect x="318.8" y="822.3" width="10.4" height="8" fill="#f4d24e"/><path d="M320.2,824.9H323.4M323.8,827.5H327.6" stroke="#e0a820" stroke-width="1.2"/><rect x="320.4" y="823.3" width="2.4" height="1.6" fill="#f9e89a"/>
<rect x="318.8" y="841.5" width="10.4" height="8" fill="#f4d24e"/><path d="M320.2,844.1H323.4M323.8,846.7H327.6" stroke="#e0a820" stroke-width="1.2"/><rect x="320.4" y="842.5" width="2.4" height="1.6" fill="#f9e89a"/>
</svg>
</body></html>
